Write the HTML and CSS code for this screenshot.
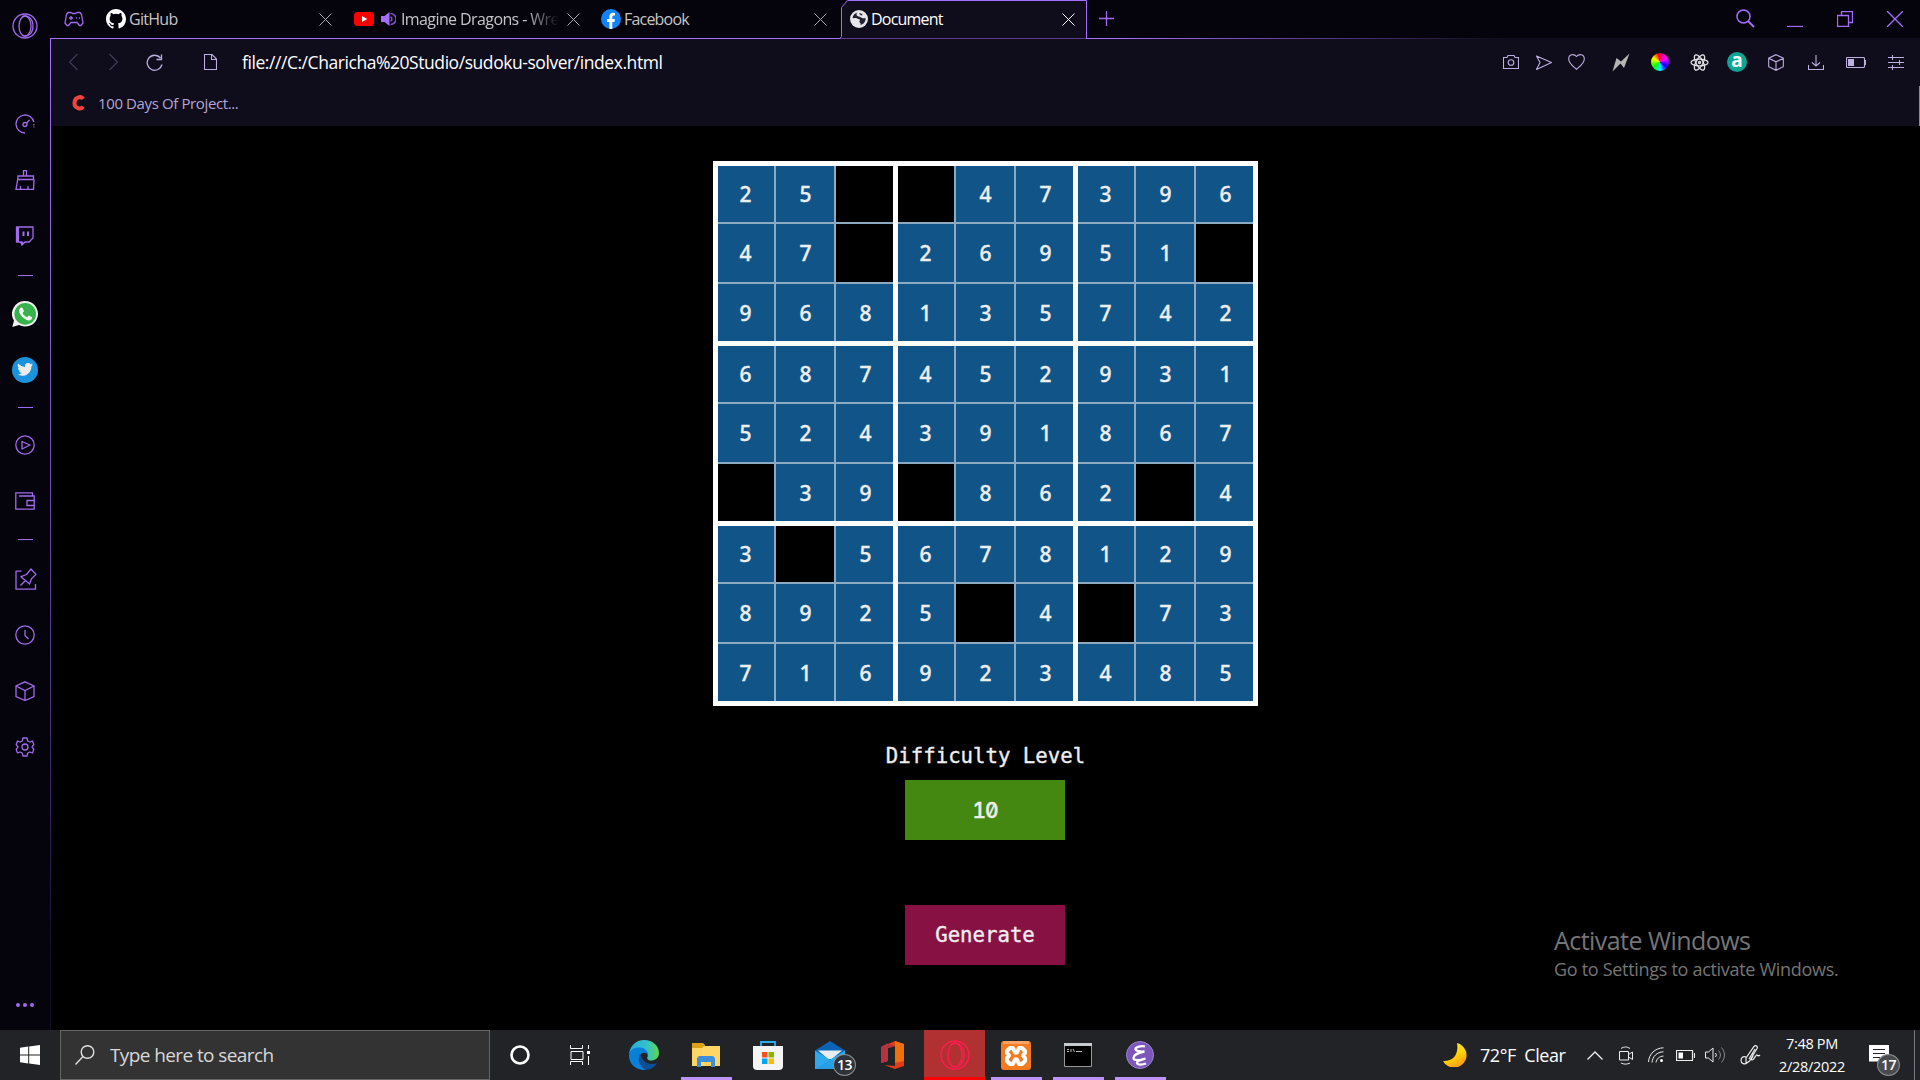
FILE: index.html
```html
<!DOCTYPE html>
<html lang="en">
<head>
<meta charset="utf-8">
<title>Document</title>
<link rel="stylesheet" href="styles.css">
</head>
<body>
<div class="browser">
  <aside class="sidebar">
    <div class="opera"><svg width="26" height="26" viewBox="0 0 26 26"><circle cx="13" cy="13" r="12"/><ellipse cx="13" cy="13" rx="6" ry="10"/><path d="M10 3.5C16 1 21 6 21 13s-5 12-11 9.5"/></svg></div>
    <div class="slot"><svg width="20" height="20" viewBox="0 0 20 20"><path d="M10 19A9 9 0 1 1 18.8 8"/><path d="M18.800 10v1.500M18.800 12.500v1"/><circle cx="10" cy="10.500" r="2"/><path d="M11.500 9L14.500 6"/></svg></div>
    <div class="slot"><svg width="20" height="20" viewBox="0 0 20 20"><path d="M8.500 6V.7h3V6M3 6h15.500v3.500H2.700zM2.700 9.500L1 19.300h17.500l.5-9.800M5.500 19v-3M13 19v-3"/></svg></div>
    <div class="slot"><svg width="19" height="20" viewBox="0 0 19 20"><path d="M1.500 1H18v11l-4 4H10l-3 3v-3H1.500z"/><path d="M1 1h3v15H1zM5 16h4l-3 3z" class="fill"/><path d="M8.500 5.500v4.500M13 5.500v4.500" stroke-width="2"/></svg></div>
    <div class="slot rule rule-a"><i></i></div>
    <div class="slot"><svg class="flat" width="26" height="26" viewBox="0 0 26 26"><path fill="#f1f1f1" d="M13.200 0A12.800 12.800 0 1 1 7 24L.3 26 2 19.600A12.800 12.800 0 0 1 13.200 0z"/><circle cx="13.200" cy="12.900" r="10.800" fill="#36b34a"/><path fill="#f4f4f4" d="M9 6.500l1.500.2 1.500 3.500-1.500 1.700c1 2 2.500 3.500 4.700 4.400l1.700-1.700 3.200 1.600c.3 2-1.600 3.400-3.600 3.200C12 18.500 7.400 13.500 7 10c0-1.500.8-3 2-3.500z"/></svg></div>
    <div class="slot"><svg class="flat" width="26" height="26" viewBox="0 0 26 26"><circle cx="13" cy="13" r="13" fill="#1b92dd"/><path fill="#ececec" transform="translate(5.200 4.500) scale(.66)" d="M23.900 4.600a10 10 0 0 1-2.800.8 4.900 4.900 0 0 0 2.100-2.700c-1 .6-2 1-3.100 1.200a4.900 4.900 0 0 0-8.400 4.500A14 14 0 0 1 1.600 3.200a4.900 4.900 0 0 0 1.500 6.500 4.900 4.900 0 0 1-2.200-.6v.1a4.900 4.900 0 0 0 3.900 4.800 5 5 0 0 1-2.200.1 4.900 4.900 0 0 0 4.600 3.400A9.900 9.900 0 0 1 0 19.500 14 14 0 0 0 7.500 21.700c9.100 0 14.300-7.700 14-14.600a10 10 0 0 0 2.400-2.500z"/></svg></div>
    <div class="slot rule rule-b"><i></i></div>
    <div class="slot"><svg width="20" height="20" viewBox="0 0 20 20"><circle cx="10" cy="10" r="9.200"/><path d="M7 6.500v7.500l8-4z" stroke-linejoin="round"/></svg></div>
    <div class="slot short"><svg width="20" height="18" viewBox="0 0 20 18"><path d="M17.500 4V.8H.8v16.400h18.400V4H4M19 8.500h-7v5h7"/></svg></div>
    <div class="slot rule rule-c"><i></i></div>
    <div class="slot short pin"><svg width="23" height="22" viewBox="0 0 23 22"><path d="M6.500 3.200H1v18h19.500V16M5.500 17.500l5-5M6 8.700l8.500 7.300 2-5.300 4.500-4.300L16 1l-4.500 5.500z" stroke-linejoin="round"/></svg></div>
    <div class="slot tall"><svg width="20" height="20" viewBox="0 0 20 20"><circle cx="10" cy="10" r="9.200"/><path d="M10 5v5.500l3.500 3.500"/></svg></div>
    <div class="slot"><svg width="20" height="20" viewBox="0 0 20 20"><path d="M10 .8l9 4.200v10.500L10 19.500 1 15.500V5zM1 5l9 4.500L19 5M10 9.500v10"/></svg></div>
    <div class="slot"><svg width="20" height="20" viewBox="0 0 20 20"><path d="M8 1h4l.7 3 2.300 1 2.500-1 1.300 3.500L17 10l1.800 2.500-1.300 3.500-2.500-1-2.300 1L12 19H8l-.7-3L5 15l-2.500 1-1.300-3.500L3 10 1.200 7.500 2.500 4 5 5l2.300-1z" stroke-linejoin="round"/><circle cx="10" cy="10" r="3"/></svg></div>
    <div class="more"><i></i><i></i><i></i></div>
  </aside>

  <main class="window">
    <header class="tabs">
      <div class="workspace"><svg width="20" height="16" viewBox="0 0 20 16"><path d="M4 1.500h3l1.500 1h3L13 1.500h3l1.500 2L19 12l-2 2.500h-1.500L13 11.500H7L4.500 14.500H3L1 12 2.500 3.500z" stroke-linejoin="round"/><path d="M7 5v4M5 7h4M12 7h1M15 7h1" stroke-width="1.300"/></svg></div>
      <div class="tab">
        <svg width="20" height="20" viewBox="0 0 16 16"><path fill="#fff" d="M8 0C3.580 0 0 3.580 0 8c0 3.540 2.290 6.530 5.470 7.590.4.070.55-.17.55-.38v-1.490c-2.010.37-2.530-.49-2.690-.94-.09-.23-.48-.94-.82-1.130-.28-.15-.68-.52-.01-.53.63-.01 1.080.58 1.230.82.72 1.210 1.870.87 2.330.66.07-.52.28-.87.51-1.070-1.780-.2-3.640-.89-3.640-3.950 0-.87.31-1.590.82-2.150-.08-.2-.36-1.020.08-2.120 0 0 .67-.21 2.200.82a7.500 7.500 0 0 1 4 0c1.530-1.040 2.200-.82 2.200-.82.44 1.100.16 1.920.08 2.120.51.560.82 1.270.82 2.150 0 3.070-1.870 3.750-3.650 3.950.29.250.54.730.54 1.480v2.190c0 .21.150.46.55.38A8 8 0 0 0 16 8c0-4.420-3.580-8-8-8z"/></svg>
        <span class="title t-github">GitHub</span>
        <svg class="x" width="13" height="13" viewBox="0 0 13 13"><path d="M.5.5l12 12M12.500.5l-12 12"/></svg>
      </div>
      <div class="tab second">
        <svg width="20" height="14" viewBox="0 0 20 14"><rect width="20" height="14" rx="3.500" fill="#f00"/><path d="M8 4l5.300 3L8 10z" fill="#fff"/></svg>
        <svg class="speaker" width="15" height="14" viewBox="0 0 15 14"><path d="M0 4h3.500L8.500 0v14l-5-4H0z" fill="#a46efc"/><path d="M9.500 1.500a5.500 5.500 0 0 1 0 11M9.500 4.800a2.400 2.400 0 0 1 0 4.400" fill="none" stroke="#8254cb" stroke-width="1.500"/></svg>
        <span class="title t-yt">Imagine Dragons - Wre</span>
        <svg class="x" width="13" height="13" viewBox="0 0 13 13"><path d="M.5.5l12 12M12.500.5l-12 12"/></svg>
      </div>
      <div class="tab">
        <svg width="20" height="20" viewBox="0 0 20 20"><circle cx="10" cy="10" r="10" fill="#1184f5"/><path fill="#fff" d="M8.400 20v-7H6v-3h2.400V7.600C8.400 5 9.900 3.800 12 3.800l2 .2v2.500h-1.200c-1.100 0-1.500.7-1.500 1.500v2h2.600l-.4 3h-2.200v7z"/></svg>
        <span class="title t-fb">Facebook</span>
        <svg class="x" width="13" height="13" viewBox="0 0 13 13"><path d="M.5.5l12 12M12.500.5l-12 12"/></svg>
      </div>
      <div class="tab active">
        <svg class="outline" width="248" height="39" viewBox="0 0 248 39"><path d="M0 38.500l1.500-2V7.500l6-7H246.500V38.500H248" fill="#0f0c1c" stroke="#a46efc"/></svg>
        <svg class="globe" width="18" height="18" viewBox="0 0 18 18"><circle cx="9" cy="9" r="9" fill="#e6e6ea"/><path d="M7.500 2.500c-1.500 1-1.200 2.500 0 3.500 1.400 1 3 .6 4.200 1.800 1 1 2.300.4 3.800.2.500 3-1.500 6-5 7 .6-1.500-.2-2-1-2.700-.6-.8.600-1.500.4-2.500-.5-1-2-.6-3.200-1.600C5.700 7.500 4 8.500 2.500 8 3 5 5 3 7.500 2.500z" fill="#24212f"/><path d="M9 3.500c1.500-.6 3 .2 3.500 1.500l-1.500.6z" fill="#24212f"/></svg>
        <span class="title t-doc">Document</span>
        <svg class="x" width="13" height="13" viewBox="0 0 13 13"><path d="M.5.5l12 12M12.500.5l-12 12"/></svg>
      </div>
      <div class="newtab"><svg width="15" height="15" viewBox="0 0 15 15"><path d="M7.500 0v15M0 7.500h15"/></svg></div>
      <div class="controls">
        <svg width="19" height="19" viewBox="0 0 19 19"><circle cx="7.500" cy="7.500" r="6.500" stroke-width="1.500"/><path d="M12 12l6 6" stroke-width="2"/></svg>
        <svg width="16" height="16" viewBox="0 0 16 16"><path d="M0 15.500h16"/></svg>
        <svg width="16" height="16" viewBox="0 0 16 16"><path d="M.5 4.500h11v11H.5zM4.500 4V.5h11v11H12"/></svg>
        <svg width="16" height="16" viewBox="0 0 16 16"><path d="M0 0l16 16M16 0L0 16" stroke-width="1.300"/></svg>
      </div>
    </header>

    <div class="body">
      <div class="toolbar">
        <svg class="dim" width="9" height="16" viewBox="0 0 9 16"><path d="M8.500 0l-8 8 8 8"/></svg>
        <svg class="dim fwd" width="9" height="16" viewBox="0 0 9 16"><path d="M.5 0l8 8-8 8"/></svg>
        <svg class="reload" width="17" height="17" viewBox="0 0 17 17"><path d="M14.500 4A7.500 7.500 0 1 0 16 10.500M15.500.5v5h-5" stroke-width="1.300"/></svg>
        <svg class="file" width="13" height="16" viewBox="0 0 13 16"><path d="M.5.5H8l4.500 4.500v10.500H.5zM7.500.5v5h5"/></svg>
        <span class="url">file:///C:/Charicha%20Studio/sudoku-solver/index.html</span>
        <div class="tools">
          <svg width="16" height="14" viewBox="0 0 16 14"><path d="M.5 2.500H4l1-2h6l1 2h3.500v11H.5z"/><circle cx="8" cy="7.500" r="2.800"/></svg>
          <svg width="16" height="15" viewBox="0 0 16 15"><path d="M.5 1L15.500 7.500.5 14.500 4 7.500z" stroke-linejoin="round"/></svg>
          <svg width="17" height="16" viewBox="0 0 17 16"><path d="M8.500 2.500C6-.5.7 0 .7 5c0 4.500 4.800 7.500 7.800 10.300C11.500 12.500 16.300 9.500 16.300 5c0-5-5.300-5.500-7.800-2.500z"/></svg>
          <svg class="flat" width="18" height="19" viewBox="0 0 18 19"><path d="M17.500.5L12 15l-3.500-4.500L.5 18.500 4.500 5l4.500 3.500z" fill="#b5b5b5"/></svg>
          <span class="wheel"></span>
          <svg class="react" width="19" height="19" viewBox="0 0 19 19"><ellipse cx="9.500" cy="9.500" rx="8.500" ry="3.400"/><ellipse cx="9.500" cy="9.500" rx="8.500" ry="3.400" transform="rotate(60 9.500 9.500)"/><ellipse cx="9.500" cy="9.500" rx="8.500" ry="3.400" transform="rotate(120 9.500 9.500)"/><circle cx="9.500" cy="9.500" r="1"/></svg>
          <span class="letter-a">a</span>
          <svg width="16" height="17" viewBox="0 0 16 17"><path d="M8 .7l7.300 3.500v8.500L8 16.300.7 12.700V4.200zM.7 4.200L8 7.800l7.300-3.600M8 7.800v8.500"/></svg>
          <svg width="16" height="16" viewBox="0 0 16 16"><path d="M8 1v11M4 8.500L8 12l4-3.500M.5 11v4.500h15V11"/></svg>
          <svg width="20" height="11" viewBox="0 0 20 11"><rect x=".5" y=".5" width="18" height="10" rx="1"/><path d="M2 2h6v7H2z" class="fill"/><path d="M19.500 3v5"/></svg>
          <svg width="16" height="15" viewBox="0 0 16 15"><path d="M0 2.500h16M0 7.500h16M0 12.500h16M4.500 0v5M11.500 5v5M4.500 10v5"/></svg>
        </div>
      </div>
      <div class="bookmarks">
        <svg width="13" height="16" viewBox="0 0 13 16"><path d="M11 4C9.500 1 3 1.500 2.500 7.500S9 15 11 11.500" fill="none" stroke="#f04340" stroke-width="4"/></svg>
        <span>100 Days Of Project...</span>
      </div>
      <section class="page">
        <div class="sudoku" id="sudoku"></div>
        <div class="label">Difficulty Level</div>
        <div class="level">10</div>
        <div class="generate">Generate</div>
      </section>
    </div>
  </main>
  <div class="activate"><p>Activate Windows</p><small>Go to Settings to activate Windows.</small></div>
  <div class="scroll-edge"></div>
</div>

<footer class="taskbar">
  <div class="start"><svg width="20" height="20" viewBox="0 0 20 20"><path fill="#fff" d="M0 2.800L8.200 1.600V9.500H0zM9.200 1.500L20 0v9.500H9.200zM0 10.500h8.200v7.900L0 17.200zM9.200 10.500H20V20L9.200 18.500z"/></svg></div>
  <div class="search">
    <svg width="20" height="20" viewBox="0 0 20 20"><circle cx="12.500" cy="7" r="6.300"/><path d="M8 11.500L.5 19.500"/></svg>
    <span>Type here to search</span>
  </div>
  <div class="app cortana"><svg width="20" height="20" viewBox="0 0 20 20"><circle cx="10" cy="10" r="8.500" fill="none" stroke="#fff" stroke-width="2.600"/></svg></div>
  <div class="app"><svg width="21" height="20" viewBox="0 0 21 20"><path fill="none" stroke="#fff" d="M.5 0v3.500h12V0M1 6.500h12v8H1zM.5 20v-3.500h12V20M18.500 0v4M18.500 11v9"/><path fill="#fff" d="M17 6h3v3h-3z"/></svg></div>
  <div class="apps">
    <div class="app"><svg width="30" height="30" viewBox="0 0 30 30"><defs><linearGradient id="eg" x2="1"><stop stop-color="#2aa9e0"/><stop offset=".6" stop-color="#35c1c8"/><stop offset="1" stop-color="#5bd84a"/></linearGradient></defs><path fill="url(#eg)" d="M0 14C1 6 7 0 15 0c9 0 15 6 15 13 0 5-4 7.500-8 7.500-3.500 0-4.300-2-3.500-3.500C20 13 16 8 11 8 6 8 2 11 0 14z"/><path fill="#0a7fd9" d="M0 15C1 9 6 7 11 7.500c5 .5 8 3.500 8 7.500-2-3-7-3-8 1-1 5 3 9 7 12 0 1-2 2-4 2C6 29.500-.5 23 0 15z"/><path fill="#0c4f93" d="M11 14c-3 4-1 13 6 15.700 5 .3 9-2.700 11-6.700-3 1.500-8 1.500-11.500-1-3-2-4-5-5.500-8z"/></svg></div>
    <div class="app open"><svg width="28" height="24" viewBox="0 0 28 24"><path fill="#dba217" d="M0 0h11l2 2v4H0z"/><path fill="#ffd666" d="M0 5h10l2-2h16v20H0z"/><path fill="#3e8fd8" d="M5 24v-9l2-2h14l2 2v9h-4v-5H9v5z"/></svg></div>
    <div class="app"><svg width="30" height="29" viewBox="0 0 30 29"><path fill="none" stroke="#26b0f0" stroke-width="1.800" d="M8 6V1h14v5"/><path fill="#f4f4f4" d="M0 5h30v20a4 4 0 0 1-4 4H4a4 4 0 0 1-4-4z"/><path fill="#f25022" d="M9 11h5.500v5.500H9z"/><path fill="#7fba00" d="M15.500 11H21v5.500h-5.500z"/><path fill="#00a4ef" d="M9 17.500h5.500V23H9z"/><path fill="#ffb900" d="M15.500 17.500H21V23h-5.500z"/></svg></div>
    <div class="app"><svg width="30" height="28" viewBox="0 0 30 28"><path fill="#0b63b5" d="M0 9.500L15 0l15 9.500V20H0z"/><path fill="#e8edf2" d="M3 9.500h24L17 18h-4z"/><path fill="#2ea9ec" d="M0 9.500l15 9.300 15-9.300V28H0z"/><path fill="#1f93df" d="M0 28l15-9.200L30 28z" opacity=".5"/></svg><b class="badge">13</b></div>
    <div class="app"><svg width="23" height="28" viewBox="0 0 23 28"><path fill="#e23c17" d="M14 0l9 3v22l-9 3-11-4 11 1V5L7 7v13l-7 2V6z"/><path fill="#b53240" d="M14 5L7 7v13l-7 2V6l6-3.500z"/><path fill="#f0700c" d="M14 0l9 3v17l-9 2z"/></svg></div>
    <div class="app current"><svg width="30" height="30" viewBox="0 0 30 30"><g fill="none" stroke="#fa1e4e" stroke-width="1.400"><circle cx="15" cy="15" r="14"/><ellipse cx="15" cy="15" rx="7" ry="12"/><path d="M12 4c7-3 12 3 12 11s-5 14-12 11"/></g></svg></div>
    <div class="app open"><svg width="30" height="29" viewBox="0 0 30 29"><rect width="30" height="29" rx="3" fill="#f47b20"/><path fill="#fba666" d="M2 0h26v3H2z"/><path fill="none" stroke="#fff" stroke-width="4" stroke-linejoin="round" d="M9 7h3l2 4.500h2L18 7h3l3 3v2l-2 2.500 2 2.500v3l-3 3h-3l-2-4.500h-2L12 23H9l-3-3v-3l2-2.500L6 12v-2z"/></svg></div>
    <div class="app open"><svg width="28" height="24" viewBox="0 0 28 24"><path fill="#000" stroke="#979797" d="M.5.5h27v23H.5z"/><path fill="#c6cbd0" d="M0 0h28v3H0z"/><path stroke="#bbb" fill="none" d="M3 6.500h2M3 8.500h2M7 6v3M9 6l1.500 3M12 8.500h6"/></svg></div>
    <div class="app open"><svg width="28" height="28" viewBox="0 0 28 28"><circle cx="14" cy="14" r="13.500" fill="#7c56ba" stroke="#9b85c8"/><path fill="none" stroke="#fff" stroke-width="2.300" d="M19 5.500C15 4.500 9.500 6 9.500 8s5 3 9 2.500C13 11.500 7.500 14 7.500 17s6 2.500 12 .5c-5 1.500-9 2.500-8.500 4.500s5 2 9 .5"/></svg></div>
  </div>
  <div class="tray">
    <div class="weather"><svg width="24" height="24" viewBox="0 0 24 24"><defs><linearGradient id="mn" x2=".5" y2="1"><stop stop-color="#ffe95c"/><stop offset=".6" stop-color="#ffd400"/><stop offset="1" stop-color="#ff9f1a"/></linearGradient></defs><path fill="url(#mn)" d="M14 0a12.500 12.500 0 1 1-14 18C10 18.500 16 12 14 0z"/></svg><span>72°F&ensp;Clear</span></div>
    <svg width="16" height="9" viewBox="0 0 16 9"><path d="M.5 8.500L8 1l7.500 7.500" stroke-width="1.300"/></svg>
    <svg width="16" height="19" viewBox="0 0 16 19"><path d="M1.500 5.500h9v8.500h-9zM10.500 8.500l4-2.500v7.500l-4-2.500M3 2.500c3-2 6-2 9 0M3 17c3 1.500 6 1.500 9 0"/></svg>
    <svg width="16" height="16" viewBox="0 0 16 16"><path d="M.5 15C1 7 7 1 15.500.8M4 15.500C4.500 9.500 9 5 15.500 4.800M8 15.500C8.500 12 11 9.500 15.500 9"/><circle cx="13.500" cy="13.500" r="1.500" class="fill"/></svg>
    <svg width="19" height="11" viewBox="0 0 19 11"><path d="M.5.5h16v10H.5zM18.500 3v5" stroke-width="1.200"/><path d="M2.500 2.500H7v6H2.500z" class="fill"/></svg>
    <svg width="21" height="18" viewBox="0 0 21 18"><path d="M.5 6h3L8 2v14l-4.500-4h-3zM10.500 7a3 3 0 0 1 0 4"/><path d="M13.500 4.500c2.500 3 2.500 6 0 9M16.500 1.500c4 5 4 10 0 15" opacity=".5"/></svg>
    <svg width="21" height="20" viewBox="0 0 21 20"><path d="M6 13L14 1.500c2-2 4 0 3 2L9.500 16 6 18.500zM6 12c-3-1-5 .5-5 3.500s4 5 6 1.500M13 8.500c1 3-3 6-1 6.500s4-6 5-5 2 1 3 0M15 4l-6 10" stroke-width="1.200"/></svg>
    <div class="clock"><span>7:48 PM</span><span class="date">2/28/2022</span></div>
    <div class="center"><svg width="20" height="20" viewBox="0 0 20 20"><path fill="#fff" stroke="none" d="M0 0h20v16.500h-8L9 20v-3.500H0z"/><path stroke="#222326" d="M4 4.500h12M4 8.500h12M4 12.500h7"/></svg><b class="badge">17</b></div>
    <i class="peek"></i>
  </div>
</footer>
<script src="sudoku.js"></script>
</body>
</html>
```
FILE: styles.css
```css
* { box-sizing: border-box; }
body {
  margin: 0;
  width: 1920px;
  height: 1080px;
  overflow: hidden;
  background: #000;
  color: #fff;
  font-family: "Open Sans", "Noto Sans", sans-serif;
  display: flex;
  flex-direction: column;
}
svg { display: block; flex: none; }
span { white-space: nowrap; }

.browser { position: relative; height: 1030px; display: flex; }

/* Sidebar */
.sidebar {
  width: 50px;
  background: #05030b;
  display: flex;
  flex-direction: column;
}
.sidebar svg, .workspace svg, .newtab svg, .controls svg {
  fill: none;
  stroke: #a06bee;
  stroke-width: 1.3;
}
.sidebar svg .fill { fill: #a06bee; stroke: none; }
.sidebar svg.flat { stroke: none; }
.opera { height: 96px; padding: 13px 0 0 12px; }
.slot { height: 56px; width: 50px; display: flex; align-items: center; justify-content: center; }
.slot svg:not(.flat) { margin-right: 1px; }
.slot.tall { height: 57px; }
.slot.short { height: 55px; }
.slot.pin { padding-left: 3px; }
.slot.rule i { width: 15px; height: 1px; background: #a06bee; margin-left: 1px; }
.rule.rule-a { height: 22px; }
.rule.rule-b { height: 19px; }
.rule.rule-c { height: 23px; }
.more { margin-top: auto; height: 27px; padding-left: 16px; display: flex; gap: 3px; }
.more i { width: 4px; height: 4px; border-radius: 50%; background: #a06bee; }

/* Tab strip */
.window { flex: 1; display: flex; flex-direction: column; }
.tabs {
  height: 39px;
  display: flex;
  background:
    linear-gradient(90deg, #a46efc 0, #a46efc 1075px, #0f0c1c 1450px) 0 38px / 100% 1px no-repeat,
    #05030b;
}
.workspace { width: 48px; padding: 11px 0 0 14px; }
.tab {
  width: 248px;
  height: 38px;
  padding: 0 14px 0 8px;
  display: flex;
  align-items: center;
  color: #c5c5c9;
  font-size: 16px;
}
.tab.second { width: 247px; padding-right: 13px; }
.tab .title { margin-left: 3px; }
.tab .x { margin-left: auto; fill: none; stroke: #a9a9ae; }
.speaker { margin-left: 7px; }
.tab .t-yt {
  margin-left: 5px;
  -webkit-mask-image: linear-gradient(90deg, #000 125px, transparent 158px);
  mask-image: linear-gradient(90deg, #000 125px, transparent 158px);
}
.t-github { letter-spacing: -.7px; }
.t-yt { letter-spacing: -.6px; }
.t-fb { letter-spacing: -.8px; }
.t-doc { letter-spacing: -.8px; }
.tab.active { position: relative; height: 39px; color: #fff; padding: 0 14px 1px 9px; }
.tab.active .globe, .tab.active .title, .tab.active .x { position: relative; }
.tab.active .x { stroke: #fff; }
.outline { position: absolute; left: -1px; top: 0; }
.newtab { padding: 11px 0 0 10px; }
.controls {
  margin-left: auto;
  margin-right: 17px;
  display: grid;
  grid-template-columns: 51px 50px 50px 16px;
  padding-top: 9px;
}
.controls svg:nth-child(n+2) { margin-top: 2px; }
.controls svg { stroke: #a46efc; }

/* Toolbar */
.body {
  flex: 1;
  display: flex;
  flex-direction: column;
  border-left: 1px solid;
  border-image: linear-gradient(#a46efc 0, #8a5fd4 25%, #50378a 65%, #0f0c1c 95%) 1;
}
.toolbar {
  height: 46px;
  padding: 0 4px 0 18px;
  background: #0f0c1c;
  display: flex;
  align-items: center;
}
.toolbar svg { fill: none; stroke: #bdb0e0; stroke-width: 1.1; }
.toolbar svg .fill { fill: #bdb0e0; stroke: none; }
.toolbar svg.flat { stroke: none; }
.toolbar svg.react { stroke: #e2e2e6; stroke-width: 1.3; }
.toolbar svg.dim { stroke: #443f58; }
.toolbar .fwd { margin-left: 31px; }
.toolbar .reload { margin-left: 28px; }
.toolbar .file { margin-left: 41px; }
.url { margin-left: 25px; font-size: 17.500px; letter-spacing: -.44px; }
.tools {
  margin-left: auto;
  display: grid;
  grid-template-columns: 32px 34px 40px 39px 40px 38px 38px 39px 41px 40px 40px;
  align-items: center;
  justify-items: center;
}
.tools svg:nth-child(3) { margin-right: 10px; }
.wheel {
  width: 18px;
  height: 18px;
  border-radius: 50%;
  background: conic-gradient(#f06, #f0f 60deg, #00f 130deg, #0ff 180deg, #0f0 230deg, #ff0 300deg, #f00 350deg, #f06);
}
.letter-a {
  width: 20px;
  height: 20px;
  border-radius: 50%;
  background: #0ea594;
  font: bold 19px/17px "Noto Sans", sans-serif;
  text-align: center;
}
.bookmarks {
  height: 41px;
  padding: 0 0 5px 21px;
  background: #0f0c1c;
  color: #b3a6d6;
  display: flex;
  align-items: center;
  gap: 13px;
  font-size: 15px;
  letter-spacing: -.38px;
}

/* Page */
.page {
  flex: 1;
  display: flex;
  flex-direction: column;
  align-items: center;
  padding-top: 35px;
  font-family: "DejaVu Sans Mono", monospace;
  font-size: 20.700px;
  color: #eee;
  -webkit-text-stroke: .35px #eee;
}
.sudoku {
  width: 545px;
  height: 545px;
  padding: 5px;
  background: #fff;
  display: grid;
  grid-template: repeat(3, 175px) / repeat(3, 175px);
  gap: 5px;
}
.box {
  display: grid;
  grid-template: 56px 58px 57px / 56px 58px 57px;
  gap: 2px;
  background: #8daac3;
}
.cell {
  background: #115588;
  display: flex;
  align-items: center;
  justify-content: center;
  font: 500 21px/1 "Noto Sans", sans-serif;
}
.cell:nth-child(3n+1) { padding-right: 1px; }
.cell:nth-child(3n+2) { padding-left: 1px; }
.cell:nth-child(3n) { padding-left: 2px; }
.cell:nth-child(n+4) { padding-top: 1px; }
.cell:nth-child(n+7) { padding-top: 2px; }
.cell.empty { background: #000; }
.label { margin-top: 38px; height: 36px; line-height: 24px; }
.level, .generate {
  width: 160px;
  height: 60px;
  margin-right: 1px;
  line-height: 61px;
  text-align: center;
}
.level {
  background: #448811;
  font-family: Inter, sans-serif;
  font-weight: 500;
  font-size: 21px;
  letter-spacing: -1px;
  font-feature-settings: "zero", "tnum";
}
.generate { margin-top: 65px; background: #881144; }

.activate { position: absolute; left: 1554px; top: 923px; color: #757575; }
.activate p { margin: 0; font-size: 25px; line-height: 34px; letter-spacing: -.55px; }
.activate small { display: block; font-size: 18px; line-height: 25px; letter-spacing: -.3px; }
.scroll-edge { position: absolute; right: 0; top: 86px; width: 1px; height: 40px; background: #8a8892; }

/* Taskbar */
.taskbar { height: 50px; background: #222326; display: flex; }
.start { width: 60px; padding: 15px 0 0 20px; }
.search {
  width: 430px;
  background: #333;
  border: 1px solid #666;
  display: flex;
  align-items: center;
  padding: 0 0 1px 14px;
  gap: 15px;
  color: #d8d8d8;
  font-size: 19px;
  letter-spacing: -.6px;
}
.search svg { fill: none; stroke: #e0e0e0; stroke-width: 1.4; }
.app { width: 61px; display: flex; align-items: center; justify-content: center; position: relative; }
.app.cortana { width: 60px; }
.apps { margin-left: 2px; display: flex; }
.apps .app { width: 62px; }
.app.open { background: linear-gradient(#bf92ff, #bf92ff) 6px 47px / 51px 3px no-repeat; }
.apps .app.current { width: 61px; margin-left: 1px; background: linear-gradient(#f00, #f00) 0 47px / 100% 3px no-repeat, #b13032; }
.badge {
  position: absolute;
  width: 23px;
  height: 22px;
  border-radius: 50%;
  border: 1px solid #898d92;
  background: #2d3338;
  font: 600 14px/19px "Open Sans", sans-serif;
  text-align: center;
  letter-spacing: -.5px;
}
.app .badge { left: 34px; top: 24px; }
.tray {
  margin-left: auto;
  display: grid;
  grid-template-columns: 145px 32px 30px 30px 29px 30px 40px 84px 50px 16px;
  align-items: center;
  justify-items: center;
}
.tray svg { fill: none; stroke: #eee; }
.tray svg .fill { fill: #fff; stroke: none; }
.weather { justify-self: start; padding-left: 9px; display: flex; align-items: center; gap: 13px; font-size: 18px; letter-spacing: -.45px; }
.weather svg { stroke: none; }
.clock { display: flex; flex-direction: column; align-items: center; font-size: 14.500px; line-height: 23px; letter-spacing: -.3px; }
.center { position: relative; }
.center .badge { left: 8px; top: 9px; background: #4a4b4e; }
.peek { justify-self: end; width: 6px; height: 50px; border-left: 1px solid #77787a; }
```
FILE: sudoku.js
```js
// Rows of the board; 0 marks a cell still to be solved.
const board = [
  "250047396",
  "470269510",
  "968135742",
  "687452931",
  "524391867",
  "039086204",
  "305678129",
  "892504073",
  "716923485"
];

const root = document.getElementById("sudoku");
for (let b = 0; b < 9; b++) {
  const box = document.createElement("div");
  box.className = "box";
  for (let i = 0; i < 9; i++) {
    const row = Math.floor(b / 3) * 3 + Math.floor(i / 3);
    const col = (b % 3) * 3 + (i % 3);
    const value = board[row][col];
    const cell = document.createElement("div");
    cell.className = value === "0" ? "cell empty" : "cell";
    cell.textContent = value === "0" ? "" : value;
    box.appendChild(cell);
  }
  root.appendChild(box);
}
```
